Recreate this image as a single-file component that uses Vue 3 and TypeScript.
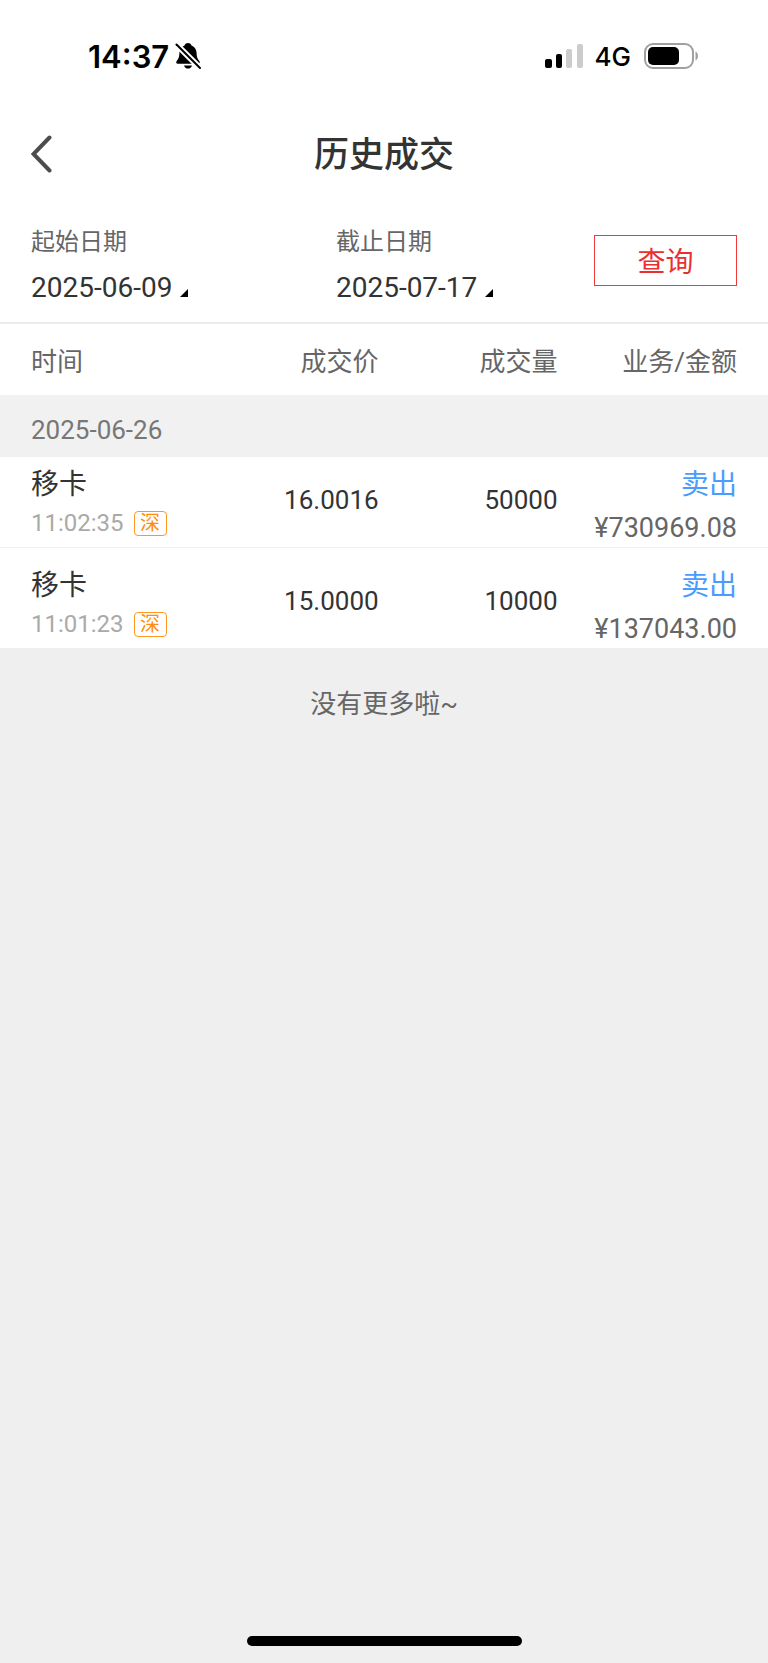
<script setup lang="ts">
import { ref } from 'vue'

interface Trade {
  name: string
  time: string
  market: string
  price: string
  volume: string
  side: string
  amount: string
}

interface TradeDay {
  date: string
  trades: Trade[]
}

const startDate = ref('2025-06-09')
const endDate = ref('2025-07-17')

const days: TradeDay[] = [
  {
    date: '2025-06-26',
    trades: [
      { name: '移卡', time: '11:02:35', market: '深', price: '16.0016', volume: '50000', side: '卖出', amount: '¥730969.08' },
      { name: '移卡', time: '11:01:23', market: '深', price: '15.0000', volume: '10000', side: '卖出', amount: '¥137043.00' },
    ],
  },
]
</script>

<template>
  <div class="page">
    <div class="top">
      <div class="status">
        <div class="status-side">
          <span class="clock">14:37</span>
          <svg class="bell" width="26" height="28" viewBox="0 0 26 28" aria-hidden="true">
            <path d="M13 1c1.900 0 3.100 1.100 3.500 2.500 3.300 1.200 5 4.100 5.100 7.600.1 4.600 1.200 6.200 2.700 7.900.9 1 .6 2.700-1.100 2.700H2.800c-1.700 0-2-1.700-1.100-2.700 1.500-1.700 2.600-3.300 2.700-7.900C4.500 7.600 6.200 4.700 9.500 3.500 9.900 2.100 11.100 1 13 1z" />
            <path d="M9 23.400h8c-.5 2-2 3.200-4 3.200s-3.500-1.200-4-3.200z" />
            <path d="M1.500 2.500 25 26" stroke="#fff" stroke-width="6" />
            <path d="M1.500 2.500 25 26" stroke="#000" stroke-width="2" stroke-linecap="round" />
          </svg>
        </div>
        <div class="status-side">
          <svg width="39" height="25" viewBox="0 0 39 25" aria-hidden="true">
            <rect x="0" y="15" width="7" height="9" rx="2" />
            <rect x="11" y="10" width="6" height="14" rx="2" />
            <rect x="21" y="5" width="6" height="19" rx="2" fill="#ccc" />
            <rect x="32" y="0" width="6" height="24" rx="2" fill="#ccc" />
          </svg>
          <span class="network">4G</span>
          <svg width="55" height="26" viewBox="0 0 55 26" aria-hidden="true">
            <rect x="1" y="1" width="48" height="24" rx="8" fill="none" stroke="#a0a0a0" stroke-width="2" />
            <rect x="4" y="4" width="31" height="18" rx="5" />
            <path d="M51.500 8.500c1.600.8 2.500 2.500 2.500 4.500s-.9 3.700-2.500 4.500z" fill="#a0a0a0" />
          </svg>
        </div>
      </div>

      <header class="nav">
        <button class="back" type="button" aria-label="返回">
          <svg width="22" height="38" viewBox="0 0 22 38" aria-hidden="true">
            <path d="M18.500 2.500 2.500 19l16 16.500" fill="none" stroke="#4d4d4d" stroke-width="4" stroke-linecap="round" />
          </svg>
        </button>
        <h1>历史成交</h1>
      </header>

      <form class="filter" @submit.prevent>
        <div class="field">
          <label for="start">起始日期</label>
          <button id="start" class="date" type="button">
            {{ startDate }}
            <svg width="8" height="8" viewBox="0 0 8 8" aria-hidden="true"><path d="M8 0v8H0z" /></svg>
          </button>
        </div>
        <div class="field">
          <label for="end">截止日期</label>
          <button id="end" class="date" type="button">
            {{ endDate }}
            <svg width="8" height="8" viewBox="0 0 8 8" aria-hidden="true"><path d="M8 0v8H0z" /></svg>
          </button>
        </div>
        <button class="query" type="submit">查询</button>
      </form>
    </div>

    <table>
      <colgroup>
        <col class="col-time" />
        <col class="col-number" />
        <col class="col-number" />
        <col />
      </colgroup>
      <thead>
        <tr>
          <th scope="col">时间</th>
          <th scope="col">成交价</th>
          <th scope="col">成交量</th>
          <th scope="col">业务/金额</th>
        </tr>
      </thead>
      <tbody v-for="day in days" :key="day.date">
        <tr class="day">
          <th colspan="4" scope="rowgroup">{{ day.date }}</th>
        </tr>
        <tr v-for="trade in day.trades" :key="trade.time" class="trade">
          <td>
            <div class="name">{{ trade.name }}</div>
            <div class="meta">
              <span class="time">{{ trade.time }}</span>
              <span class="market">{{ trade.market }}</span>
            </div>
          </td>
          <td class="number">{{ trade.price }}</td>
          <td class="number">{{ trade.volume }}</td>
          <td>
            <div class="name side">{{ trade.side }}</div>
            <div class="amount">{{ trade.amount }}</div>
          </td>
        </tr>
      </tbody>
    </table>

    <p class="end-note">没有更多啦~</p>
    <div class="home-bar"></div>
  </div>
</template>

<style>
body {
  margin: 0;
  background: #efefef;
}
</style>

<style scoped>
.page {
  display: flex;
  flex-direction: column;
  box-sizing: border-box;
  min-height: 100vh;
  padding-bottom: 17px;
  background: #efefef;
  color: #333;
  font-family: Roboto, "Noto Sans CJK SC", sans-serif;
}

button {
  margin: 0;
  padding: 0;
  border: 0;
  background: none;
  color: inherit;
  font: inherit;
}

.top {
  background: #fff;
  border-bottom: 2px solid #ebebeb;
}

.status {
  display: flex;
  justify-content: space-between;
  align-items: center;
  height: 112px;
  padding: 0 69px 0 88px;
  color: #000;
  font-family: Inter, sans-serif;
}

.status-side {
  display: flex;
  align-items: center;
}

.clock {
  margin-right: 6px;
  font-size: 31px;
  font-weight: 600;
}

.network {
  margin: 0 13px 0 11px;
  font-size: 26px;
  font-weight: 500;
}

.nav {
  display: grid;
  grid-template-columns: 1fr auto 1fr;
  align-items: center;
  height: 84px;
  padding: 0 31px;
}

.back {
  justify-self: start;
  display: flex;
}

h1 {
  margin: 0;
  padding-top: 4px;
  font-size: 35px;
  font-weight: 500;
  line-height: 48px;
}

.filter {
  display: grid;
  grid-template-columns: 13fr 11fr 143px;
  align-items: start;
  height: 126px;
  padding: 0 31px;
}

.field {
  padding-top: 26px;
}

label {
  display: block;
  color: #666;
  font-size: 24px;
  line-height: 40px;
}

.date {
  display: flex;
  align-items: baseline;
  gap: 8px;
  margin-top: 6px;
  font-size: 28px;
  line-height: 40px;
}

.query {
  height: 51px;
  margin-top: 39px;
  padding-top: 4px;
  border: 1px solid #f03a3a;
  color: #e93030;
  font-size: 28px;
  line-height: 40px;
}

table {
  width: 100%;
  table-layout: fixed;
  border-collapse: collapse;
  background: #fff;
}

.col-time {
  width: 26%;
}

.col-number {
  width: 23.3%;
}

th,
td {
  padding: 0;
  font-weight: 400;
  text-align: right;
}

th:first-child,
td:first-child {
  padding-left: 31px;
  text-align: left;
}

th:last-child,
td:last-child {
  padding-right: 31px;
}

thead th {
  height: 71px;
  color: #666;
  font-size: 26px;
}

.day th {
  box-sizing: border-box;
  height: 62px;
  padding-top: 8px;
  background: #f1f1f1;
  color: #777;
  font-size: 26px;
}

.trade td {
  padding-top: 10px;
  vertical-align: top;
}

.trade + .trade td {
  padding-top: 20px;
  border-top: 1px solid #efefef;
}

.name {
  font-size: 28px;
  line-height: 36px;
}

.side {
  color: #4a9bff;
}

.meta {
  display: flex;
  align-items: center;
  gap: 10px;
  height: 40px;
}

.time {
  color: #aaa;
  font-size: 24px;
}

.market {
  box-sizing: border-box;
  width: 33px;
  height: 25px;
  border: 1px solid #ff9820;
  border-radius: 4px;
  color: #ff8c0a;
  font-size: 20px;
  line-height: 22px;
  text-align: center;
}

.trade .number {
  font-size: 26px;
  line-height: 66px;
}

.amount {
  margin-top: 6px;
  color: #666;
  font-size: 27px;
  line-height: 38px;
}

.end-note {
  margin: 36px 0;
  color: #666;
  font-size: 26px;
  line-height: 40px;
  text-align: center;
}

.home-bar {
  width: 275px;
  height: 10px;
  margin: auto auto 0;
  border-radius: 5px;
  background: #000;
}
</style>
